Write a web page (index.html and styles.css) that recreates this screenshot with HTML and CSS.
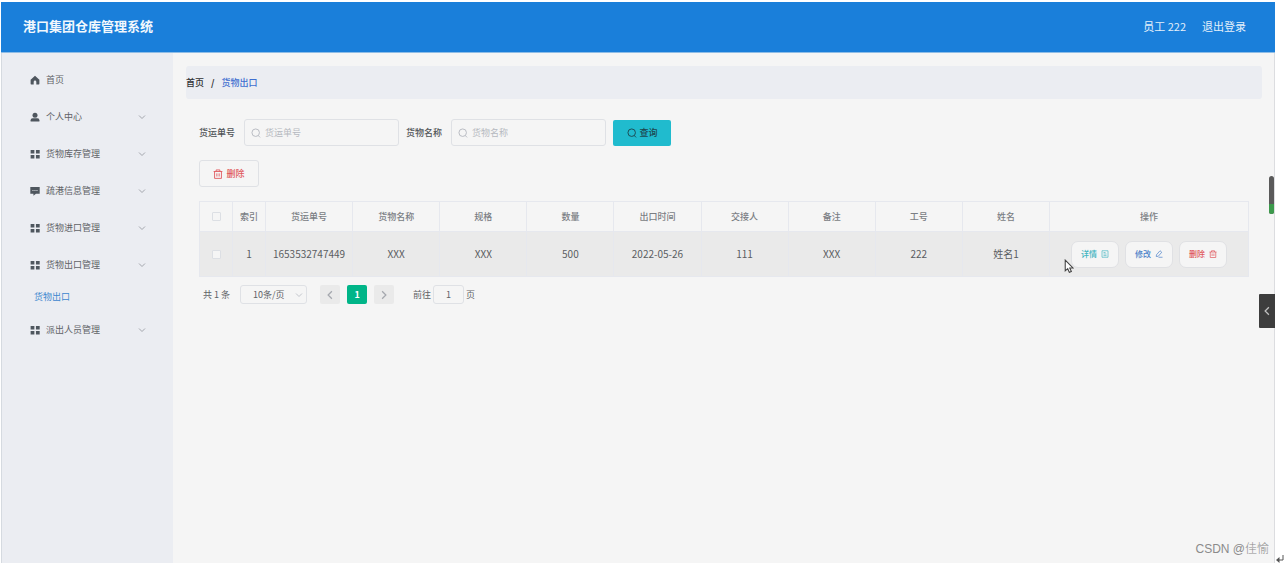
FILE: index.html
```html
<!DOCTYPE html>
<html lang="zh-CN">
<head>
<meta charset="utf-8">
<title>港口集团仓库管理系统</title>
<link rel="stylesheet" href="styles.css">
</head>
<body>
<svg class="sprite" aria-hidden="true">
  <symbol id="i-home" viewBox="0 0 16 16"><path d="M8 1 1 7.500V14a1 1 0 0 0 1 1h3.900v-4a2.100 2.100 0 0 1 4.200 0V15H14a1 1 0 0 0 1-1V7.500z" fill="currentColor"/></symbol>
  <symbol id="i-user" viewBox="0 0 16 16"><circle cx="8" cy="5" r="4" fill="currentColor"/><path d="M1 15v-2q0-3 3-3h8q3 0 3 3v2z" fill="currentColor"/></symbol>
  <symbol id="i-grid" viewBox="0 0 16 16"><path d="M1 1.500h6v5.500H1zM9.500 1.500h6v5.500h-6zM1 9.500h6V15H1zM9.500 9.500h6V15h-6z" fill="currentColor"/></symbol>
  <symbol id="i-chat" viewBox="0 0 16 16"><path fill-rule="evenodd" d="M.5 1.500h15v11H9.500L5.500 15.500v-3h-5zM4 6.300v1.500h1.500V6.300zm3.200 0v1.500h1.500V6.300zm3.200 0v1.500h1.500V6.300z" fill="currentColor"/></symbol>
  <symbol id="i-down" viewBox="0 0 16 16"><path d="m2 5 6 6 6-6" fill="none" stroke="currentColor" stroke-width="1.600"/></symbol>
  <symbol id="i-left" viewBox="0 0 16 16"><path d="M11 2 5 8l6 6" fill="none" stroke="currentColor" stroke-width="2"/></symbol>
  <symbol id="i-right" viewBox="0 0 16 16"><path d="m5 2 6 6-6 6" fill="none" stroke="currentColor" stroke-width="2"/></symbol>
  <symbol id="i-search" viewBox="0 0 16 16"><circle cx="7.500" cy="7.500" r="6" fill="none" stroke="currentColor" stroke-width="1.500"/><path d="m11.500 12 3 3" stroke="currentColor" stroke-width="1.500"/></symbol>
  <symbol id="i-trash" viewBox="0 0 16 16"><path d="M1 4h14M5 4V1.500h6V4M2.500 4v11h11V4M6.200 7v5M9.800 7v5" fill="none" stroke="currentColor" stroke-width="1.400"/></symbol>
  <symbol id="i-doc" viewBox="0 0 16 16"><path d="M2 1.500h12v13H2zM5 5h4M5 8h6M5 11.200h6" fill="none" stroke="currentColor" stroke-width="1.300"/></symbol>
  <symbol id="i-edit" viewBox="0 0 16 16"><path d="m3 9.500 7-8 3.500 3-7 8L2.500 13zM7 14.500h8" fill="none" stroke="currentColor" stroke-width="1.400"/></symbol>
</svg>
<div class="app">
  <header class="topbar">
    <h1 class="brand">港口集团仓库管理系统</h1>
    <span class="who">员工 222</span>
    <a class="logout" href="#">退出登录</a>
  </header>
  <div class="body">
    <nav class="sidebar">
      <a class="item" href="#"><svg class="ico"><use href="#i-home"/></svg>首页</a>
      <a class="item" href="#"><svg class="ico"><use href="#i-user"/></svg>个人中心<svg class="caret"><use href="#i-down"/></svg></a>
      <a class="item" href="#"><svg class="ico"><use href="#i-grid"/></svg>货物库存管理<svg class="caret"><use href="#i-down"/></svg></a>
      <a class="item" href="#"><svg class="ico"><use href="#i-chat"/></svg>疏港信息管理<svg class="caret"><use href="#i-down"/></svg></a>
      <a class="item" href="#"><svg class="ico"><use href="#i-grid"/></svg>货物进口管理<svg class="caret"><use href="#i-down"/></svg></a>
      <a class="item" href="#"><svg class="ico"><use href="#i-grid"/></svg>货物出口管理<svg class="caret"><use href="#i-down"/></svg></a>
      <a class="subitem" href="#">货物出口</a>
      <a class="item" href="#"><svg class="ico"><use href="#i-grid"/></svg>派出人员管理<svg class="caret"><use href="#i-down"/></svg></a>
    </nav>
    <main class="content">
      <div class="crumbs"><a class="crumb" href="#">首页</a><span class="slash">/</span><a class="crumb current" href="#">货物出口</a></div>
      <div class="panel">
        <form class="filters">
          <label class="flabel" for="no">货运单号</label>
          <div class="field"><svg class="ico"><use href="#i-search"/></svg><input class="finput" id="no" type="text" placeholder="货运单号"></div>
          <label class="flabel" for="name">货物名称</label>
          <div class="field"><svg class="ico"><use href="#i-search"/></svg><input class="finput" id="name" type="text" placeholder="货物名称"></div>
          <button class="query" type="button"><svg class="ico"><use href="#i-search"/></svg>查询</button>
        </form>
        <button class="remove" type="button"><svg class="ico"><use href="#i-trash"/></svg>删除</button>
        <table class="grid">
          <colgroup><col class="c-check"><col class="c-index"><col><col><col><col><col><col><col><col><col><col class="c-ops"></colgroup>
          <thead>
            <tr><th><input class="check" type="checkbox" aria-label="全选"></th><th>索引</th><th>货运单号</th><th>货物名称</th><th>规格</th><th>数量</th><th>出口时间</th><th>交接人</th><th>备注</th><th>工号</th><th>姓名</th><th>操作</th></tr>
          </thead>
          <tbody>
            <tr><td><input class="check" type="checkbox" aria-label="选择第1行"></td><td>1</td><td>1653532747449</td><td>XXX</td><td>XXX</td><td>500</td><td>2022-05-26</td><td>111</td><td>XXX</td><td>222</td><td>姓名1</td>
            <td><div class="ops">
              <button class="op detail" type="button">详情<svg class="ico"><use href="#i-doc"/></svg></button>
              <button class="op edit" type="button">修改<svg class="ico"><use href="#i-edit"/></svg></button>
              <button class="op del" type="button">删除<svg class="ico"><use href="#i-trash"/></svg></button>
            </div></td></tr>
          </tbody>
        </table>
        <div class="pager">
          <span class="total">共 1 条</span>
          <div class="sizer"><select class="size" aria-label="每页条数"><option>10条/页</option></select><svg class="caret"><use href="#i-down"/></svg></div>
          <button class="pg" type="button" aria-label="上一页"><svg class="ico"><use href="#i-left"/></svg></button>
          <button class="pg active" type="button">1</button>
          <button class="pg" type="button" aria-label="下一页"><svg class="ico"><use href="#i-right"/></svg></button>
          <label class="jump">前往<input class="jinput" type="text" value="1">页</label>
        </div>
      </div>
    </main>
  </div>
  <div class="meter"><div class="level"></div></div>
  <button class="drawer" type="button" aria-label="展开"><svg class="ico"><use href="#i-left"/></svg></button>
  <span class="mark">CSDN @佳愉</span>
</div>
<svg class="cursor" viewBox="0 0 9 13"><path d="M1 1v10l2.300-2 1.500 3.400 1.900-.8-1.500-3.300h3z" fill="#fff" stroke="#444" stroke-width="1"/></svg>
<svg class="return" viewBox="0 0 8 8"><path d="M7 0v5H2" fill="none" stroke="#555" stroke-width="1"/><path d="M0 5l3.500-3v6z" fill="#555"/></svg>
</body>
</html>
```
FILE: styles.css
```css
* { box-sizing: border-box; }
body {
  margin: 0;
  padding: 2px 9px 1px 1px;
  min-height: 100vh;
  display: flex;
  position: relative;
  background: #fff;
  color: #606266;
  font: 9px/14px "Noto Sans CJK SC", sans-serif;
}
a { color: inherit; text-decoration: none; }
button, input, select { font: inherit; color: inherit; margin: 0; }
button { cursor: pointer; }
.sprite { position: absolute; width: 0; height: 0; }
.ico, .caret { width: 10px; height: 10px; flex: none; }

.app {
  flex: 1;
  min-width: 0;
  display: flex;
  flex-direction: column;
  position: relative;
  background: #f5f5f5;
  border-left: 1px solid #d5dae0;
  border-right: 1px solid #dcdde0;
}
.topbar {
  display: flex;
  align-items: center;
  gap: 16px;
  height: 51px;
  margin: 0 -1px;
  padding: 0 29px 2px 22px;
  background: #1a7fda;
  border-bottom: 1px solid #8fbde6;
  color: #e4f0fb;
  font-size: 11px;
}
.brand { flex: 1; margin: 0; font-size: 13px; line-height: 20px; font-weight: 700; color: #f2f8fd; }
.body { flex: 1; display: flex; }

.sidebar { width: 171px; flex: none; padding-top: 8px; background: #ebedf2; }
.item {
  display: flex;
  align-items: center;
  gap: 6px;
  height: 37px;
  padding: 0 27px 0 28px;
}
.item .ico { color: #4e565e; }
.item .caret { width: 8px; height: 8px; margin-left: auto; color: #8f9399; }
.subitem { display: flex; align-items: center; height: 28px; padding-left: 32px; color: #3e87cf; }

.content { flex: 1; min-width: 0; padding: 13px 12px 0 13px; }
.crumbs {
  display: flex;
  align-items: center;
  gap: 7px;
  height: 33px;
  background: #ebedf2;
  border-radius: 3px;
  color: #303133;
}
.crumb { font-weight: 500; }
.slash { font-weight: 700; }
.current { color: #3f6fd0; }
.panel { padding: 20px 13px 0; }

.filters { display: flex; align-items: center; }
.flabel { margin-right: 9px; font-weight: 500; color: #505357; }
.field {
  display: flex;
  align-items: center;
  gap: 4px;
  width: 155px;
  height: 27px;
  margin-right: 7px;
  padding: 0 6px;
  border: 1px solid #dfe1e5;
  border-radius: 3px;
  color: #b5b9c0;
}
.finput { flex: 1; min-width: 0; padding: 0; border: 0; outline: 0; background: none; color: #606266; }
.finput::placeholder { color: #b5b9c0; }
.query, .remove {
  display: flex;
  align-items: center;
  justify-content: center;
  gap: 3px;
  border-radius: 3px;
  font-weight: 500;
}
.query { width: 58px; height: 26px; padding: 0; border: 0; border-radius: 2px; background: #20bbce; color: #1d4850; }
.remove { width: 60px; height: 27px; margin-top: 14px; padding: 0; border: 1px solid #dfe1e5; background: #f5f5f5; color: #e0575b; }

.grid {
  width: 100%;
  margin-top: 14px;
  table-layout: fixed;
  border-collapse: collapse;
  text-align: center;
}
.c-check, .c-index { width: 33px; }
.c-ops { width: 199px; }
.grid th, .grid td { padding: 0; border: 1px solid #e6e8ee; }
.grid th { height: 30px; font-weight: 500; color: #7b7e84; }
.grid td { height: 45px; background: #eaeaea; font-size: 10px; color: #5a5d61; }
.check {
  appearance: none;
  display: block;
  width: 9px;
  height: 9px;
  margin: 0 auto;
  border: 1px solid #dcdfe4;
  border-radius: 1px;
  background: #f5f5f5;
}
.ops { display: flex; justify-content: center; gap: 6px; }
.op {
  display: flex;
  align-items: center;
  justify-content: center;
  gap: 4px;
  width: 48px;
  height: 27px;
  padding: 0;
  border: 1px solid #e0e1e4;
  border-radius: 7px;
  background: #f5f5f5;
  font-size: 8px;
  font-weight: 500;
}
.op .ico { width: 8px; height: 8px; }
.detail { color: #3fb4c0; }
.edit { color: #4a7fc8; }
.del { color: #e0575b; }

.pager { display: flex; align-items: center; margin-top: 8px; padding-left: 4px; }
.sizer { position: relative; margin: 0 13px 0 10px; }
.size {
  appearance: none;
  display: block;
  width: 67px;
  height: 19px;
  padding: 0 12px;
  border: 1px solid #dfe1e5;
  border-radius: 3px;
  background: #f5f5f5;
}
.sizer .caret { position: absolute; right: 4px; top: 6px; width: 8px; height: 8px; color: #b5b9c0; }
.pg {
  display: grid;
  place-items: center;
  width: 20px;
  height: 19px;
  margin-right: 7px;
  padding: 0;
  border: 0;
  border-radius: 2px;
  background: #eaeaea;
  color: #a5a8ae;
}
.active { background: #00b588; color: #fff; font-weight: 700; }
.jump { display: flex; align-items: center; gap: 2px; margin-left: 12px; }
.jinput {
  width: 31px;
  height: 19px;
  padding: 0;
  border: 1px solid #dfe1e5;
  border-radius: 3px;
  background: #f5f5f5;
  text-align: center;
}

.meter {
  position: absolute;
  right: 0;
  top: 174px;
  width: 5px;
  height: 38px;
  display: flex;
  align-items: flex-end;
  overflow: hidden;
  border-radius: 3px;
  background: #5a5a5a;
}
.level { width: 100%; height: 10px; background: #3c9a4c; }
.drawer {
  position: absolute;
  right: -1px;
  top: 292px;
  display: grid;
  place-items: center;
  width: 16px;
  height: 34px;
  padding: 0;
  border: 0;
  border-radius: 1px 0 0 1px;
  background: #3d3d3d;
  color: #c0c0c0;
}
.mark {
  position: absolute;
  right: 5px;
  bottom: 5px;
  font-family: "Liberation Sans", "Noto Sans CJK SC", sans-serif;
  font-size: 12px;
  line-height: 18px;
  font-weight: 300;
  color: #8b8b8b;
}
.cursor { position: absolute; left: 1064px; top: 259px; width: 10px; height: 14px; }
.return { position: absolute; right: 0; bottom: 1px; width: 8px; height: 8px; }
```
